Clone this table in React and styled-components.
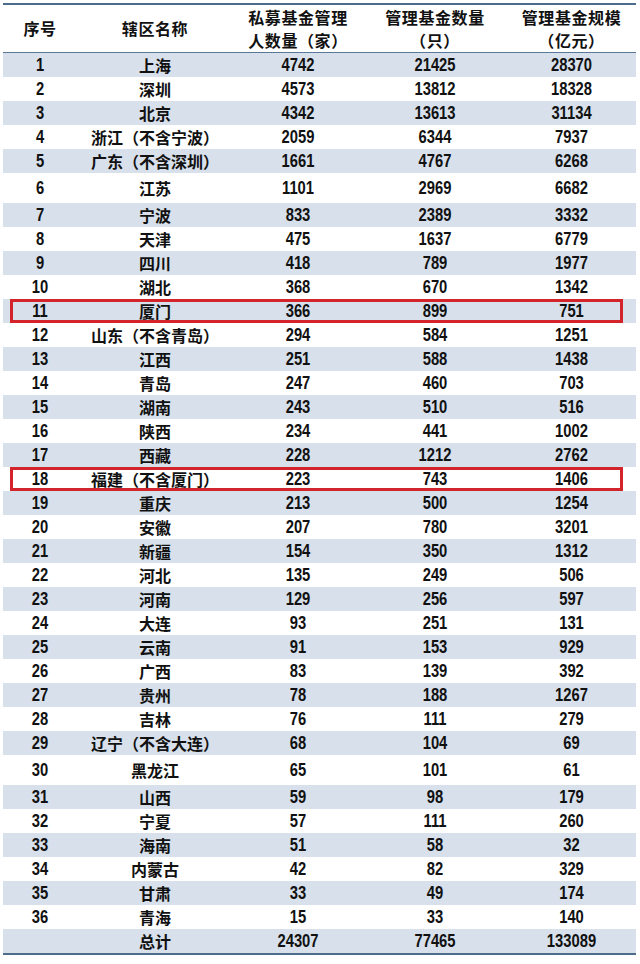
import styled, { createGlobalStyle } from "styled-components";

const rows = [
  [1, "上海", 4742, 21425, 28370],
  [2, "深圳", 4573, 13812, 18328],
  [3, "北京", 4342, 13613, 31134],
  [4, "浙江（不含宁波）", 2059, 6344, 7937],
  [5, "广东（不含深圳）", 1661, 4767, 6268],
  [6, "江苏", 1101, 2969, 6682],
  [7, "宁波", 833, 2389, 3332],
  [8, "天津", 475, 1637, 6779],
  [9, "四川", 418, 789, 1977],
  [10, "湖北", 368, 670, 1342],
  [11, "厦门", 366, 899, 751],
  [12, "山东（不含青岛）", 294, 584, 1251],
  [13, "江西", 251, 588, 1438],
  [14, "青岛", 247, 460, 703],
  [15, "湖南", 243, 510, 516],
  [16, "陕西", 234, 441, 1002],
  [17, "西藏", 228, 1212, 2762],
  [18, "福建（不含厦门）", 223, 743, 1406],
  [19, "重庆", 213, 500, 1254],
  [20, "安徽", 207, 780, 3201],
  [21, "新疆", 154, 350, 1312],
  [22, "河北", 135, 249, 506],
  [23, "河南", 129, 256, 597],
  [24, "大连", 93, 251, 131],
  [25, "云南", 91, 153, 929],
  [26, "广西", 83, 139, 392],
  [27, "贵州", 78, 188, 1267],
  [28, "吉林", 76, 111, 279],
  [29, "辽宁（不含大连）", 68, 104, 69],
  [30, "黑龙江", 65, 101, 61],
  [31, "山西", 59, 98, 179],
  [32, "宁夏", 57, 111, 260],
  [33, "海南", 51, 58, 32],
  [34, "内蒙古", 42, 82, 329],
  [35, "甘肃", 33, 49, 174],
  [36, "青海", 15, 33, 140],
];

const marked = [11, 18];
const tallRows = [6, 30];

const GlobalStyle = createGlobalStyle`
  body {
    margin: 0;
    background: #ffffff;
    color: #111111;
    font-family: "Noto Sans CJK SC", sans-serif;
  }
`;

const Table = styled.div`
  width: 633px;
  margin: 3px 0 0 3px;
  border-top: 2px solid #4d6b8b;
  border-bottom: 2px solid #4d6b8b;
`;

const Row = styled.div`
  position: relative;
  display: grid;
  grid-template-columns: 74px 156px 130px 144px 129px;
  align-items: center;
  height: ${(p) => (p.$tall ? 30 : 24)}px;
  background: ${(p) => (p.$band ? "#d7e0eb" : "#ffffff")};

  ${(p) =>
    p.$marked &&
    `
    &::after {
      content: "";
      position: absolute;
      top: 0;
      bottom: 0;
      left: 7px;
      right: 13px;
      border: 3px solid #d3232b;
    }
  `}
`;

const HeadRow = styled(Row)`
  height: 47px;
  border-bottom: 1px solid #5b7898;
`;

const HeadCell = styled.div`
  text-align: center;
  font-family: "Noto Sans CJK SC", sans-serif;
  font-weight: 700;
  font-size: 16px;
  line-height: 23px;
  letter-spacing: 0.6px;
`;

const Num = styled.div`
  text-align: center;
  font-family: "Liberation Sans", sans-serif;
  font-weight: 700;
  font-size: 18px;
  line-height: 24px;
  transform: scaleX(0.82);
`;

const Name = styled.div`
  text-align: center;
  font-family: "Noto Sans CJK SC", sans-serif;
  font-weight: 700;
  font-size: 16px;
  line-height: 24px;
  letter-spacing: 0;
`;

export default function App() {
  return (
    <>
      <GlobalStyle />
      <Table>
        <HeadRow>
          <HeadCell>序号</HeadCell>
          <HeadCell>辖区名称</HeadCell>
          <HeadCell>
            私募基金管理
            <br />
            人数量（家）
          </HeadCell>
          <HeadCell>
            管理基金数量
            <br />
            （只）
          </HeadCell>
          <HeadCell>
            管理基金规模
            <br />
            （亿元）
          </HeadCell>
        </HeadRow>
        {rows.map(([no, name, managers, funds, scale]) => (
          <Row
            key={no}
            $band={no % 2 === 1}
            $tall={tallRows.includes(no)}
            $marked={marked.includes(no)}
          >
            <Num>{no}</Num>
            <Name>{name}</Name>
            <Num>{managers}</Num>
            <Num>{funds}</Num>
            <Num>{scale}</Num>
          </Row>
        ))}
        <Row $band>
          <Num />
          <Name>总计</Name>
          <Num>24307</Num>
          <Num>77465</Num>
          <Num>133089</Num>
        </Row>
      </Table>
    </>
  );
}
